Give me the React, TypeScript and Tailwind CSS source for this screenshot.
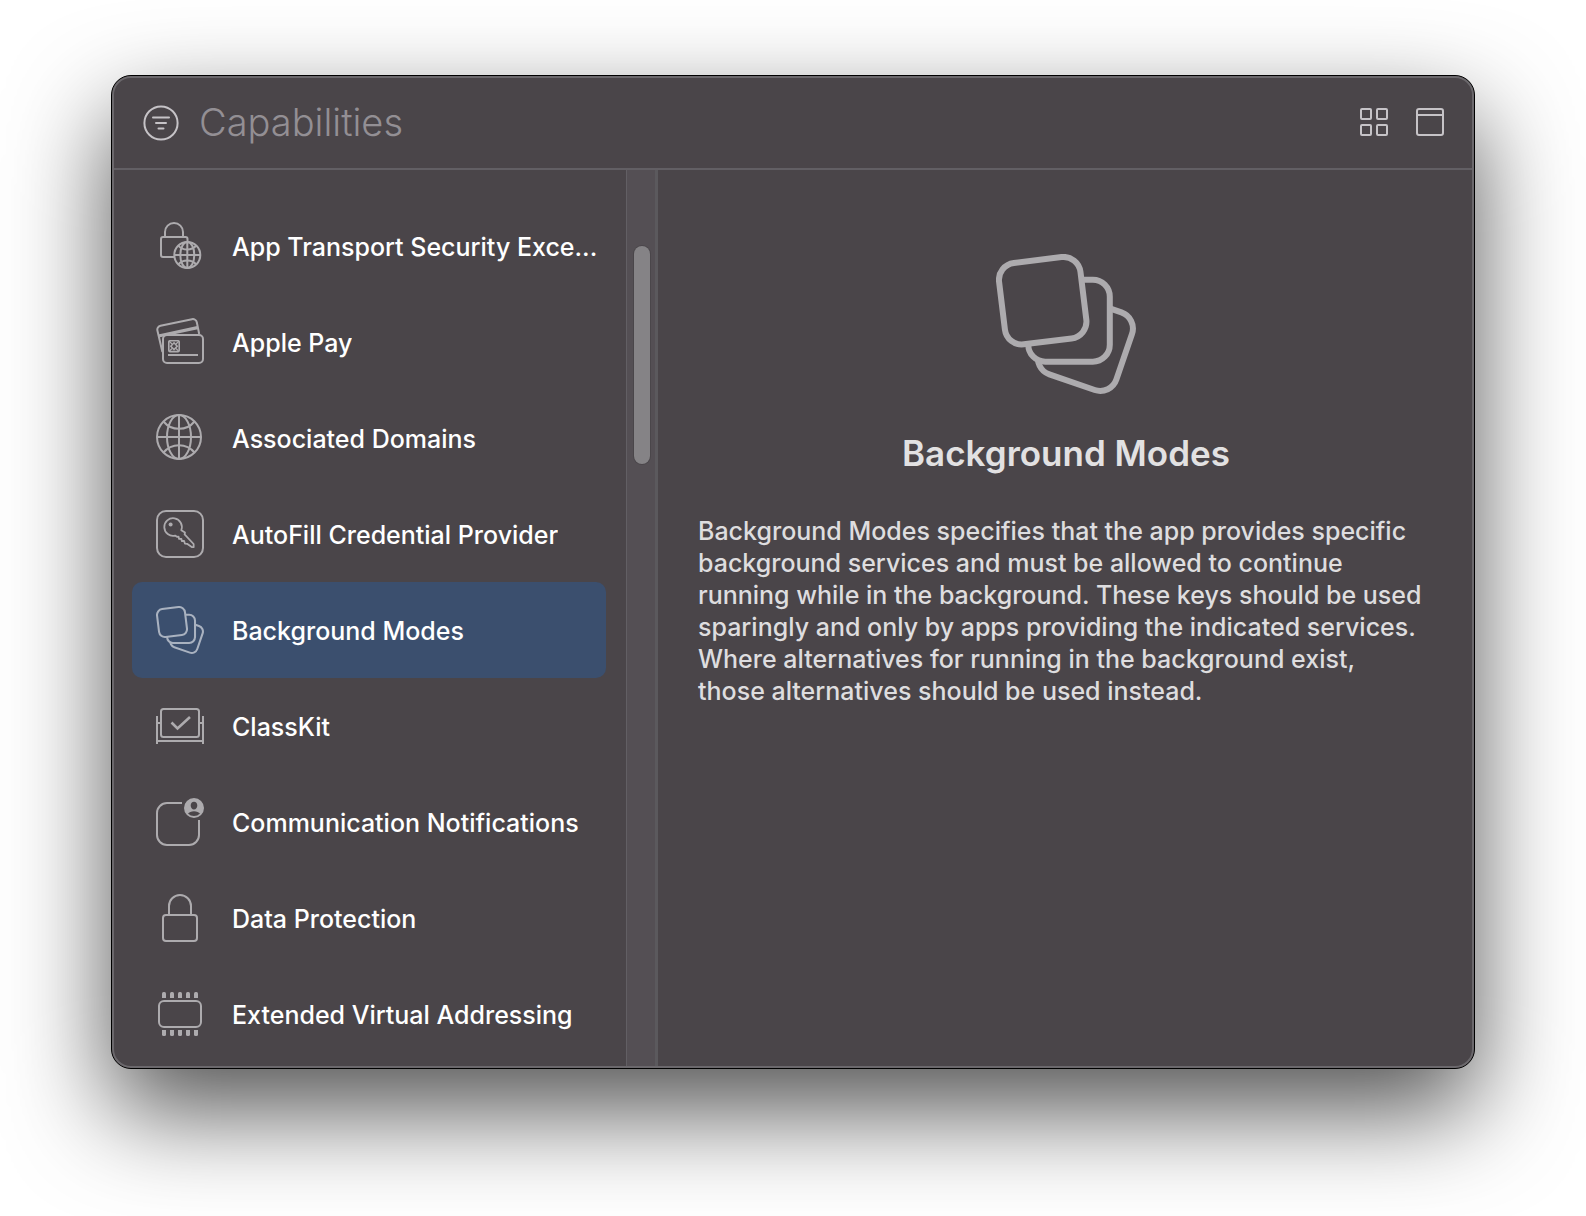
import { useState } from "react";
import type { ComponentType } from "react";
import clsx from "clsx";

type IconProps = { className?: string };

type Capability = {
  id: string;
  name: string;
  Icon: ComponentType<IconProps>;
};

function FilterIcon() {
  return (
    <svg className="size-9" viewBox="0 0 36 36" fill="none" stroke="currentColor" strokeWidth="2" strokeLinecap="round">
      <circle cx="18" cy="18" r="16.6" />
      <path d="M10 12.5h16M13 18h10M15.5 23.5h5" />
    </svg>
  );
}

function GridIcon() {
  return (
    <svg className="size-7" viewBox="0 0 28 28" fill="none" stroke="currentColor" strokeWidth="2">
      <rect x="1" y="1" width="10" height="10" rx="1" />
      <rect x="17" y="1" width="10" height="10" rx="1" />
      <rect x="1" y="17" width="10" height="10" rx="1" />
      <rect x="17" y="17" width="10" height="10" rx="1" />
    </svg>
  );
}

function WindowIcon() {
  return (
    <svg className="size-7" viewBox="0 0 28 28" fill="none" stroke="currentColor" strokeWidth="2">
      <rect x="1" y="1" width="26" height="26" rx="2" />
      <path d="M1 7h26" />
    </svg>
  );
}

function TransportSecurityIcon({ className }: IconProps) {
  return (
    <svg className={className} viewBox="0 0 48 48" fill="none" stroke="currentColor" strokeWidth="2">
      <path d="M9 15v-5a9 9 0 0 1 18 0v5" />
      <path d="M18 35H7a2 2 0 0 1-2-2V17a2 2 0 0 1 2-2h22.5a2 2 0 0 1 2 2v2" />
      <circle cx="31.3" cy="33" r="13" />
      <ellipse cx="31.3" cy="33" rx="7" ry="13" />
      <path d="M31.3 20v26M18.3 33h26" />
      <path d="M22.5 23.8c4.5 5 13 5 17.6 0M22.5 42.2c4.500-5 13-5 17.6 0" />
    </svg>
  );
}

function ApplePayIcon({ className }: IconProps) {
  return (
    <svg className={className} viewBox="0 0 48 48" fill="none" stroke="currentColor" strokeWidth="2">
      <path d="M6.4 34 1.4 12.5a4 4 0 0 1 3.1-4.8L36 1.2a4 4 0 0 1 4.8 3.1L43.2 16" />
      <path d="M2.5 18 41.5 9.6" strokeWidth="3.2" />
      <rect x="7" y="17" width="40" height="28" rx="4" />
      <rect x="12.8" y="22.8" width="10.400" height="10.800" rx="1" strokeWidth="1.6" />
      <path d="m18 24.8 3.2 3.400-3.2 3.400-3.200-3.400z" strokeWidth="1.6" />
      <path d="m13 23 3 3M23 23l-3 3M13 33.500l3-3M23 33.500l-3-3" strokeWidth="1.200" />
      <path d="M12 37h30" />
    </svg>
  );
}

function GlobeIcon({ className }: IconProps) {
  return (
    <svg className={className} viewBox="0 0 48 48" fill="none" stroke="currentColor" strokeWidth="2">
      <circle cx="23" cy="23" r="22" />
      <ellipse cx="23" cy="23" rx="12" ry="22" />
      <path d="M23 1v44M1 23h44" />
      <path d="M7.5 7.5a20 20 0 0 0 31 0M7.5 38.5a20 20 0 0 1 31 0" />
    </svg>
  );
}

function KeyIcon({ className }: IconProps) {
  return (
    <svg className={className} viewBox="0 0 48 48" fill="none" stroke="currentColor" strokeWidth="2">
      <rect x="1" y="1" width="46" height="46" rx="9" />
      <path
        d="M25.3 20.2a8.8 8.8 0 1 0-6.2 5.4l1.8 1.2 1.6-.2.6 2.3 2.3.1.4 2 2.3-.1.8 2.7 2.2.2 4.6 3.2 2 .2-.1-3.2-9-9.6.4-1.8z"
        strokeWidth="1.8"
        strokeLinejoin="round"
      />
      <circle cx="14.6" cy="14.5" r="2" fill="currentColor" stroke="none" />
    </svg>
  );
}

/* The cards are filled with the surface behind them so each one covers the next */
function CardStackIcon({ className }: IconProps) {
  return (
    <svg className={className} viewBox="0 0 140 140" stroke="currentColor" strokeWidth="6">
      <rect x="48.4" y="48.4" width="82" height="82" rx="17" transform="rotate(19 89.4 89.4)" />
      <rect x="32.3" y="25.7" width="81.5" height="82" rx="17" />
      <rect x="5.7" y="5.7" width="82" height="82" rx="17" transform="rotate(-7 46.7 46.7)" />
    </svg>
  );
}

function ClassKitIcon({ className }: IconProps) {
  return (
    <svg className={className} viewBox="0 0 48 48" fill="none" stroke="currentColor" strokeWidth="2">
      <rect x="5" y="7" width="38" height="28" rx="2.5" />
      <path d="M1 14v28M47 14v28M1 39h46M1 21h4M43 21h4" />
      <path d="m15.5 20.5 6 6L34 15" strokeWidth="2.6" />
    </svg>
  );
}

function CommunicationIcon({ className }: IconProps) {
  return (
    <svg className={className} viewBox="0 0 48 48" fill="none" stroke="currentColor" strokeWidth="2">
      <path d="M26 5H11A10 10 0 0 0 1 15v22a10 10 0 0 0 10 10h22a10 10 0 0 0 10-10V22" />
      <path
        d="M38 0a10 10 0 1 1 0 20 10 10 0 0 1 0-20zm0 3.8c-2 0-3.3 1.6-3.3 3.8s1.4 4 3.3 4 3.3-1.8 3.3-4-1.3-3.8-3.3-3.8zm0 9.4c-2.7 0-4.9.9-6 2.4a8.4 8.4 0 0 0 12 0c-1.1-1.5-3.3-2.4-6-2.4z"
        fill="currentColor"
        fillRule="evenodd"
        stroke="none"
      />
    </svg>
  );
}

function LockIcon({ className }: IconProps) {
  return (
    <svg className={className} viewBox="0 0 48 48" fill="none" stroke="currentColor" strokeWidth="2">
      <path d="M13 21v-9a11 11 0 0 1 22 0v9" />
      <rect x="7" y="21" width="34" height="26" rx="3" />
    </svg>
  );
}

function ChipIcon({ className }: IconProps) {
  return (
    <svg className={className} viewBox="0 0 48 48" fill="none" stroke="currentColor" strokeWidth="2">
      <rect x="3" y="11" width="42" height="26" rx="5" />
      {[6, 14, 22, 30, 38].map((x) => (
        <g key={x} fill="currentColor" stroke="none">
          <path d={`M${x} 8V3.5a1.5 1.5 0 0 1 1.5-1.5h1a1.5 1.5 0 0 1 1.5 1.5V8z`} />
          <path d={`M${x} 40v4.5a1.5 1.5 0 0 0 1.5 1.5h1a1.5 1.5 0 0 0 1.5-1.5V40z`} />
        </g>
      ))}
    </svg>
  );
}

const CAPABILITIES: Capability[] = [
  { id: "ats", name: "App Transport Security Exce...", Icon: TransportSecurityIcon },
  { id: "apple-pay", name: "Apple Pay", Icon: ApplePayIcon },
  { id: "domains", name: "Associated Domains", Icon: GlobeIcon },
  { id: "autofill", name: "AutoFill Credential Provider", Icon: KeyIcon },
  { id: "background", name: "Background Modes", Icon: CardStackIcon },
  { id: "classkit", name: "ClassKit", Icon: ClassKitIcon },
  { id: "communication", name: "Communication Notifications", Icon: CommunicationIcon },
  { id: "data-protection", name: "Data Protection", Icon: LockIcon },
  { id: "addressing", name: "Extended Virtual Addressing", Icon: ChipIcon },
];

export default function App() {
  const [selectedId, setSelectedId] = useState("background");
  const [filter, setFilter] = useState("");

  return (
    <main className="flex min-h-screen bg-white px-[111px] pt-[75px] pb-[147px] font-['Inter',sans-serif]">
      <div className="flex min-w-0 flex-1 flex-col overflow-hidden rounded-[20px] border border-black bg-[#4a4549] shadow-[0_42px_100px_rgba(0,0,0,0.68)]">
        <div className="flex flex-1 flex-col rounded-[19px] border-2 border-[#6b686c]">
          {/* Header */}
          <header className="flex h-[92px] items-center border-b-2 border-[#625f64] pr-7 pl-[29px] text-[#c6c3c7]">
            <label htmlFor="filter" aria-label="Filter capabilities">
              <FilterIcon />
            </label>
            <input
              id="filter"
              type="text"
              value={filter}
              onChange={(e) => setFilter(e.target.value)}
              placeholder="Capabilities"
              className="ml-5 min-w-0 flex-1 bg-transparent pb-0.5 text-[38px] font-light text-white outline-none placeholder:text-[#938f94]"
            />
            <div className="flex gap-7 pb-0.5">
              <button type="button" aria-label="Show as grid">
                <GridIcon />
              </button>
              <button type="button" aria-label="Toggle details">
                <WindowIcon />
              </button>
            </div>
          </header>

          <div className="flex flex-1">
            {/* Capability list */}
            <ul className="w-[512px] shrink-0 pt-7 pr-5 pl-[18px]">
              {CAPABILITIES.map(({ id, name, Icon }) => (
                <li key={id}>
                  <button
                    type="button"
                    onClick={() => setSelectedId(id)}
                    className={clsx(
                      "flex h-24 w-full items-center gap-7 rounded-[10px] pr-1 pl-6 text-left",
                      id === selectedId && "bg-[#3b4f6e]"
                    )}
                  >
                    <Icon
                      className={clsx(
                        "size-12 shrink-0",
                        id === selectedId
                          ? "fill-[#3b4f6e] text-[#a9b2c0]"
                          : "text-[#adabae]"
                      )}
                    />
                    <span className="truncate pt-1 text-[25px] font-medium text-white">{name}</span>
                  </button>
                </li>
              ))}
            </ul>

            {/* Scrollbar */}
            <div className="w-8 shrink-0 border-r-[3px] border-l border-r-[#5b595d] border-l-[#625f64] bg-[#544f54] pt-[76px] pl-[7px]">
              <div className="h-[218px] w-4 rounded-full bg-[#858386] ring-1 ring-[#4a464a]" />
            </div>

            {/* Details */}
            <section className="flex min-w-0 flex-1 flex-col items-center pt-[84px] pr-[38px] pl-10">
              <CardStackIcon className="size-[140px] fill-[#4a4549] text-[#adabae]" />
              <h1 className="mt-[37px] text-[35px] leading-[44px] font-semibold text-[#e2e1e2]">
                Background Modes
              </h1>
              <p className="mt-10 w-full text-[25px] leading-8 font-medium text-[#dedddf]">
                Background Modes specifies that the app provides specific background
                services and must be allowed to continue running while in the
                background. These keys should be used sparingly and only by apps
                providing the indicated services. Where alternatives for running in
                the background exist,
                <br />
                those alternatives should be used instead.
              </p>
            </section>
          </div>
        </div>
      </div>
    </main>
  );
}
